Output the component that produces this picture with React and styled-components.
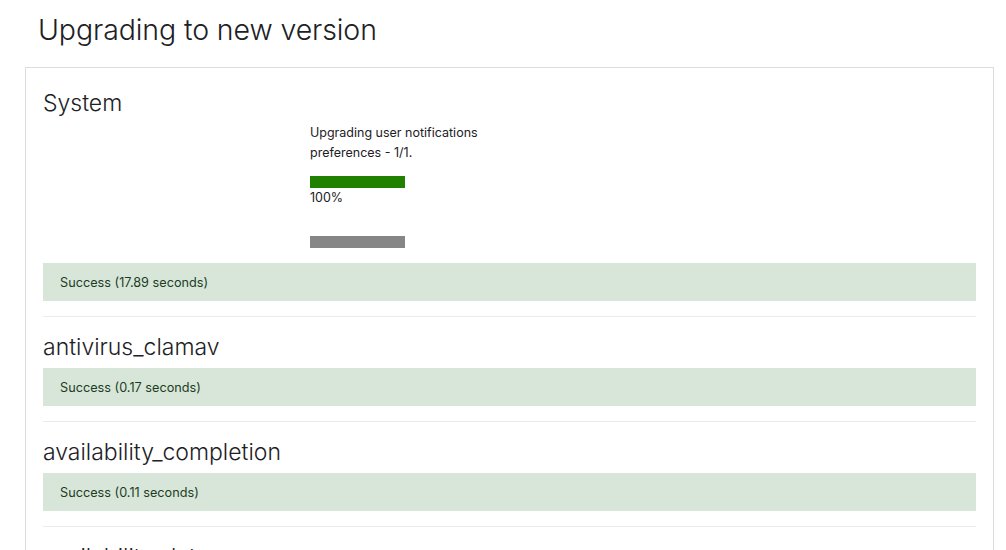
import React from "react";
import styled, { createGlobalStyle } from "styled-components";

const Global = createGlobalStyle`
  html, body { margin: 0; padding: 0; background: #fff; }
  body {
    font-family: Inter, "Noto Sans", "Liberation Sans", sans-serif;
    color: #1d2125;
    overflow: hidden;
  }
`;

const Page = styled.div`
  padding: 13px 13px 0 25px;
  width: 1006px;
  box-sizing: border-box;
`;

const Title = styled.h2`
  margin: 0 0 20px 13px;
  font-size: 28.5px;
  font-weight: 300;
  line-height: 34px;
  letter-spacing: -0.1px;
  color: #1d2125;
`;

const Panel = styled.div`
  width: 969px;
  box-sizing: border-box;
  border: 1px solid #dcdcdc;
  padding: 17px 17px 40px;
`;

const Heading = styled.h3`
  margin: ${(p) => (p.$first ? "5px" : "17px")} 0 ${(p) => (p.$first ? "7px" : "8px")};
  font-size: 23px;
  font-weight: 300;
  line-height: 26px;
  color: #1d2125;
`;

const Progress = styled.div`
  margin-left: 267px;
  width: 200px;
  font-size: 12.5px;
  line-height: 20px;
  color: #1d2125;
`;

const Bar = styled.div`
  width: 95px;
  height: 12px;
  background: ${(p) => p.$color};
  margin-top: ${(p) => p.$top}px;
`;

const Percent = styled.div`
  font-size: 12.5px;
  line-height: 20px;
`;

const Alert = styled.div`
  margin-top: ${(p) => p.$top || 0}px;
  background: #d7e6d8;
  color: #1c3c1f;
  font-size: 12.7px;
  line-height: 18px;
  padding: 11px 17px 9px;
`;

const Rule = styled.hr`
  margin: 15px 0 0;
  border: 0;
  border-top: 1px solid #e9ebec;
  height: 0;
`;

const plugins = [
  { name: "antivirus_clamav", time: "0.17" },
  { name: "availability_completion", time: "0.11" },
];

export default function App() {
  return (
    <>
      <Global />
      <Page>
        <Title>Upgrading to new version</Title>
        <Panel>
          <Heading $first>System</Heading>
          <Progress>
            Upgrading user notifications preferences - 1/1.
            <Bar $color="#208000" $top={13} />
            <Percent>100%</Percent>
            <Bar $color="#868686" $top={28} />
          </Progress>
          <Alert $top={15}>Success (17.89 seconds)</Alert>
          <Rule />
          {plugins.map((p) => (
            <React.Fragment key={p.name}>
              <Heading>{p.name}</Heading>
              <Alert>Success ({p.time} seconds)</Alert>
              <Rule />
            </React.Fragment>
          ))}
          <Heading>availability_date</Heading>
        </Panel>
      </Page>
    </>
  );
}
